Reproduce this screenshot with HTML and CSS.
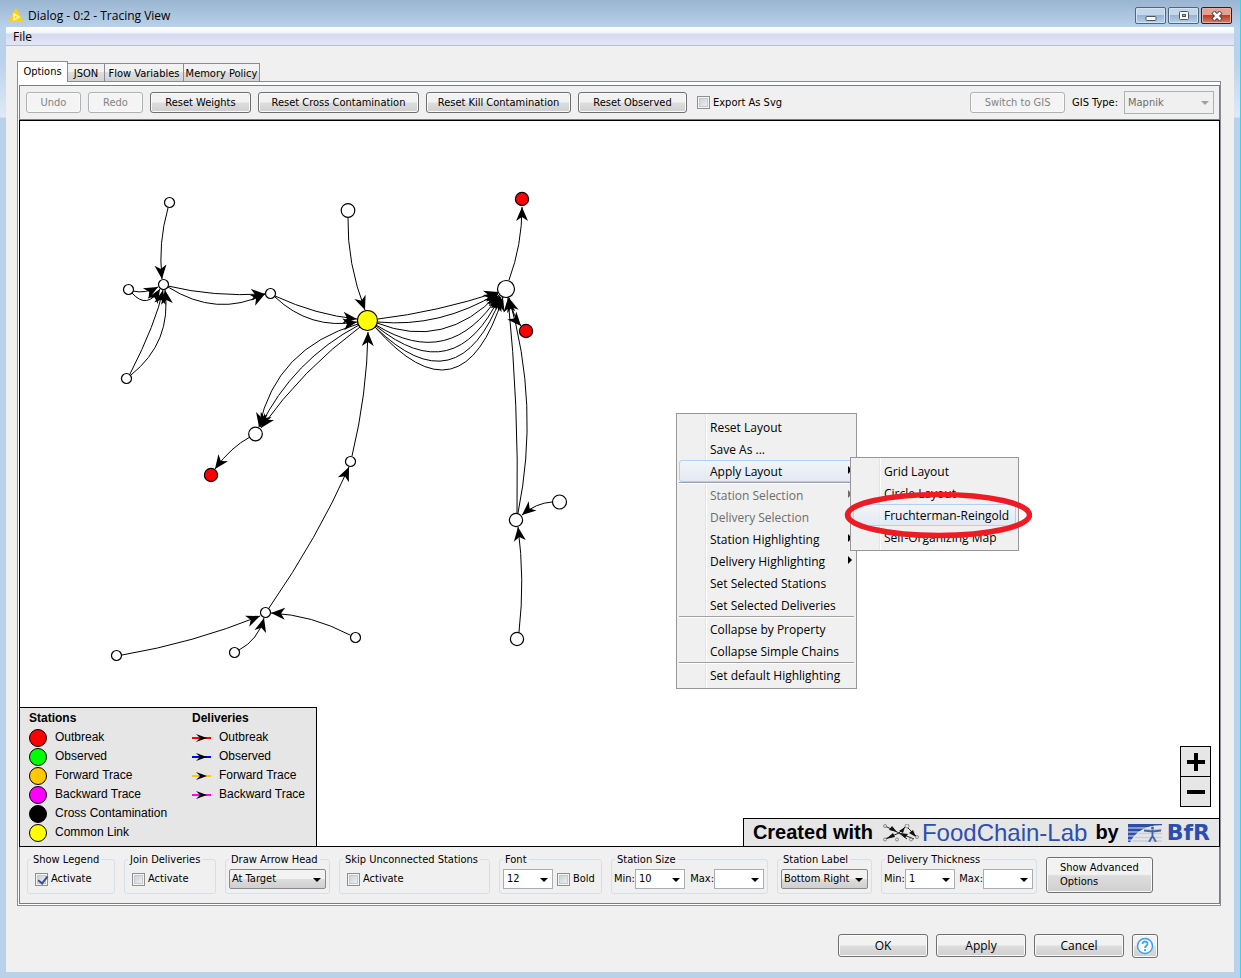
FILE: index.html
```html
<!DOCTYPE html>
<html lang="en">
<head>
<meta charset="utf-8">
<title>Dialog - 0:2 - Tracing View</title>
<link rel="stylesheet" href="styles.css">
</head>
<body>
<div class="window">
  <header class="titlebar">
    <svg class="titlebar-icon" width="16" height="14" viewBox="0 0 16 14" aria-hidden="true"><path d="M8 0 16 14H0Z" fill="#fcd20a"/><path d="M6 6 11 9 6 12Z" fill="none" stroke="#fff3a8" stroke-width="1.5"/></svg>
    <h1 class="titlebar-text">Dialog - 0:2 - Tracing View</h1>
    <div class="window-controls">
      <button class="win-btn" aria-label="Minimize"><svg width="12" height="10" viewBox="0 0 12 10"><rect x="1" y="5.500" width="10" height="4" rx="1" fill="#fff" stroke="#4a5565"/></svg></button>
      <button class="win-btn" aria-label="Maximize"><svg width="12" height="10" viewBox="0 0 12 10"><rect x="1.500" y=".5" width="9" height="8" rx="1" fill="#fff" stroke="#4a5565"/><rect x="4.500" y="3.500" width="3" height="2" fill="#9db9d8" stroke="#4a5565"/></svg></button>
      <button class="win-btn win-btn--close" aria-label="Close"><svg width="12" height="10" viewBox="0 0 12 10"><path d="M2 1 10 9M10 1 2 9" stroke="#4d3a40" stroke-width="4.500"/><path d="M2.500 1.500 9.500 8.500M9.500 1.500 2.500 8.500" stroke="#fff" stroke-width="2.600"/></svg></button>
    </div>
  </header>

  <div class="client">
    <nav class="menubar"><button class="menubar-item">File</button></nav>

    <main class="content">
      <div class="tabs" role="tablist">
        <button class="tab tab--options tab--active" role="tab" aria-selected="true">Options</button>
        <button class="tab tab--json" role="tab">JSON</button>
        <button class="tab tab--flow" role="tab">Flow Variables</button>
        <button class="tab tab--memory" role="tab">Memory Policy</button>
      </div>

      <div class="panel">
        <section class="panel-inner">
          <div class="toolbar">
            <button class="btn btn--history" disabled>Undo</button>
            <button class="btn btn--history" disabled>Redo</button>
            <button class="btn btn--weights">Reset Weights</button>
            <button class="btn btn--cross">Reset Cross Contamination</button>
            <button class="btn btn--kill">Reset Kill Contamination</button>
            <button class="btn btn--observed">Reset Observed</button>
            <label class="check check--svg"><input type="checkbox">Export As Svg</label>
            <button class="btn btn--gis" disabled>Switch to GIS</button>
            <label for="gis-type">GIS Type:</label>
            <span class="combo combo--gis combo--disabled"><select id="gis-type" disabled><option>Mapnik</option></select></span>
          </div>

          <div class="canvas">
            <svg class="graph" width="1199" height="725" viewBox="20 121 1199 725" role="img" aria-label="Delivery network">
              <defs>
                <marker id="arrow" markerUnits="userSpaceOnUse" markerWidth="15" markerHeight="14" viewBox="-14 -7 15 14" refX="0" refY="0" orient="auto"><path d="M0 0-14-6-10 0-14 6Z"/></marker>
              </defs>
              <g class="edges">
                <path d="M168 208Q158 243 162 279"/>
                <path d="M348 218Q347 263 365 310"/>
                <path d="M133 291Q145 294 158 287"/>
                <path d="M132 293Q147 310 160 289"/>
                <path d="M130 374Q156 323 163 290"/>
                <path d="M131 375Q172 342 165 290"/>
                <path d="M168 286Q213 297 265 294"/>
                <path d="M168 287Q217 318 265 294"/>
                <path d="M275 296Q316 315 357 319"/>
                <path d="M275 297Q310 330 357 322"/>
                <path d="M378 319Q437 312 498 292"/>
                <path d="M378 322Q440 328 498 293"/>
                <path d="M377 323Q445 350 498 294"/>
                <path d="M376 325Q450 371 499 295"/>
                <path d="M376 326Q455 390 500 296"/>
                <path d="M375 327Q458 408 501 297"/>
                <path d="M375 327Q462 426 503 297"/>
                <path d="M358 324Q276 348 259 427"/>
                <path d="M359 325Q293 360 260 427"/>
                <path d="M360 327Q303 369 261 428"/>
                <path d="M250 437Q231 447 215 469"/>
                <path d="M269 608Q318 537 349 467"/>
                <path d="M352 456Q367 394 368 332"/>
                <path d="M122 655Q193 643 260 616"/>
                <path d="M239 650Q258 640 264 618"/>
                <path d="M350 635Q312 615 271 613"/>
                <path d="M509 280Q522 245 522 207"/>
                <path d="M509 298Q514 318 521 326"/>
                <path d="M517 513Q519 405 508 298"/>
                <path d="M518 513Q540 405 509 298"/>
                <path d="M552 502Q536 503 522 515"/>
                <path d="M519 632Q525 580 518 527"/>
              </g>
              <g class="nodes">
                <circle cx="169.500" cy="202.500" r="5"/><circle cx="163.500" cy="284.500" r="5"/><circle cx="128.500" cy="289.500" r="5"/>
                <circle cx="126.500" cy="378.500" r="5"/><circle cx="270.500" cy="293.500" r="5"/><circle cx="350.500" cy="461.500" r="5"/>
                <circle cx="265.500" cy="612.500" r="5"/><circle cx="116.500" cy="655.500" r="5"/><circle cx="234.500" cy="652.500" r="5"/>
                <circle cx="355.500" cy="637.500" r="5"/><circle cx="348" cy="210.500" r="6.800"/><circle cx="506" cy="289" r="8.500"/>
                <circle cx="255.500" cy="434" r="6.800"/><circle cx="516" cy="520" r="6.600"/><circle cx="559.500" cy="502" r="7"/>
                <circle cx="517" cy="639" r="6.600"/>
                <circle class="node--outbreak" cx="522" cy="199" r="6.600"/><circle class="node--outbreak" cx="526" cy="331" r="6.600"/>
                <circle class="node--outbreak" cx="211" cy="475" r="6.600"/>
                <circle class="node--common" cx="367.500" cy="320.500" r="10"/>
              </g>
            </svg>

            <aside class="legend">
              <div class="legend-col legend-col--stations">
                <h2>Stations</h2>
                <p><i class="dot dot--outbreak"></i>Outbreak</p>
                <p><i class="dot dot--observed"></i>Observed</p>
                <p><i class="dot dot--forward"></i>Forward Trace</p>
                <p><i class="dot dot--backward"></i>Backward Trace</p>
                <p><i class="dot dot--cross"></i>Cross Contamination</p>
                <p><i class="dot dot--common"></i>Common Link</p>
              </div>
              <div class="legend-col">
                <h2>Deliveries</h2>
                <p><svg class="line" width="19" height="8" viewBox="0 0 19 8"><path d="M0 4H19" stroke="#f00" stroke-width="2"/><path d="M15 4 4 0 8 4 4 8Z"/></svg>Outbreak</p>
                <p><svg class="line" width="19" height="8" viewBox="0 0 19 8"><path d="M0 4H19" stroke="#00f" stroke-width="2"/><path d="M15 4 4 0 8 4 4 8Z"/></svg>Observed</p>
                <p><svg class="line" width="19" height="8" viewBox="0 0 19 8"><path d="M0 4H19" stroke="#ffc800" stroke-width="2"/><path d="M15 4 4 0 8 4 4 8Z"/></svg>Forward Trace</p>
                <p><svg class="line" width="19" height="8" viewBox="0 0 19 8"><path d="M0 4H19" stroke="#f0f" stroke-width="2"/><path d="M15 4 4 0 8 4 4 8Z"/></svg>Backward Trace</p>
              </div>
            </aside>

            <div class="zoom">
              <button aria-label="Zoom in"><svg width="18" height="18" viewBox="0 0 18 18"><path d="M9 0V18M0 9H18" stroke="#000" stroke-width="4"/></svg></button>
              <button aria-label="Zoom out"><svg width="18" height="18" viewBox="0 0 18 18"><path d="M0 9H18" stroke="#000" stroke-width="4"/></svg></button>
            </div>

            <div class="credit">
              <span>Created with</span>
              <svg class="credit-net" width="36" height="18" viewBox="0 0 36 18" aria-hidden="true">
                <g stroke="#222" fill="none"><path d="M2 2 16 9 31 15M2 15 16 9 23 2 33 12M16 9 24 15"/></g>
                <g fill="#111"><path d="M14 8 6 6 9 2ZM3 15 10 9 12 13ZM22 3 16 7 20 9ZM33 13 26 9 30 6ZM17 9 25 10 22 14Z"/></g>
                <g fill="#e6e6e6" stroke="#666" stroke-width=".7"><circle cx="2" cy="2" r="1.500"/><circle cx="2" cy="15.500" r="1.500"/><circle cx="24" cy="2" r="2"/><circle cx="14" cy="15.500" r="1.500"/><circle cx="28" cy="15.500" r="1.500"/><circle cx="34" cy="13" r="1.500"/></g>
              </svg>
              <span class="credit-lab">FoodChain-Lab</span>
              <span>by</span>
              <svg class="credit-mark" width="34" height="18" viewBox="0 0 34 18" aria-hidden="true">
                <path d="M0 1.500H34M0 5.500H34M0 9.500H34M0 13.500H34M0 17H34" stroke="#c6cdd8" stroke-width="1.500"/>
                <path d="M0 0H34V2C20 1 8 8 3 18H0Z" fill="#2b4fae"/>
                <path d="M0 4H22M0 8H14M0 12H9M0 16H5" stroke="#e6e6e6" stroke-width="1"/>
                <path d="M3 18C8 8 20 1 34 2" fill="none" stroke="#e6e6e6" stroke-width="1.500"/>
                <circle cx="24.500" cy="4" r="1.500" fill="#3f66a8"/><path d="M16 6.500 24.500 7.500 33 6.500M24.500 6V12L21 18M24.500 12 28 18" fill="none" stroke="#3f66a8" stroke-width="1.800"/>
              </svg>
              <b class="credit-bfr">BfR</b>
            </div>

            <div class="menu menu--main" role="menu">
              <button role="menuitem">Reset Layout</button>
              <button role="menuitem">Save As ...</button>
              <button role="menuitem" class="has-sub is-hot">Apply Layout</button>
              <hr>
              <button role="menuitem" class="has-sub" disabled>Station Selection</button>
              <button role="menuitem" disabled>Delivery Selection</button>
              <button role="menuitem" class="has-sub">Station Highlighting</button>
              <button role="menuitem" class="has-sub">Delivery Highlighting</button>
              <button role="menuitem">Set Selected Stations</button>
              <button role="menuitem">Set Selected Deliveries</button>
              <hr>
              <button role="menuitem">Collapse by Property</button>
              <button role="menuitem">Collapse Simple Chains</button>
              <hr>
              <button role="menuitem">Set default Highlighting</button>
            </div>
            <div class="menu menu--sub" role="menu">
              <button role="menuitem">Grid Layout</button>
              <button role="menuitem">Circle Layout</button>
              <button role="menuitem" class="is-hot">Fruchterman-Reingold</button>
              <button role="menuitem">Self-Organizing Map</button>
            </div>
            <svg class="callout" width="188" height="48" viewBox="0 0 188 48" aria-hidden="true"><ellipse cx="94.500" cy="24" rx="91" ry="20.500"/></svg>
          </div>

          <div class="settings">
            <fieldset class="group group--legend"><legend>Show Legend</legend><label class="check"><input type="checkbox" checked>Activate</label></fieldset>
            <fieldset class="group group--join"><legend>Join Deliveries</legend><label class="check"><input type="checkbox">Activate</label></fieldset>
            <fieldset class="group group--arrow group--tight"><legend>Draw Arrow Head</legend><span class="combo combo--button combo--fill"><select aria-label="Draw Arrow Head"><option>At Target</option></select></span></fieldset>
            <fieldset class="group group--skip"><legend>Skip Unconnected Stations</legend><label class="check"><input type="checkbox">Activate</label></fieldset>
            <fieldset class="group group--font group--tight"><legend>Font</legend><span class="combo combo--edit"><select aria-label="Font size"><option>12</option></select></span><label class="check check--bold"><input type="checkbox">Bold</label></fieldset>
            <fieldset class="group group--size group--range"><legend>Station Size</legend><label for="smin">Min:</label><span class="combo combo--edit"><select id="smin"><option>10</option></select></span><label class="max" for="smax">Max:</label><span class="combo combo--edit"><select id="smax"><option></option></select></span></fieldset>
            <fieldset class="group group--label group--tight"><legend>Station Label</legend><span class="combo combo--button combo--fill"><select aria-label="Station Label"><option>Bottom Right</option></select></span></fieldset>
            <fieldset class="group group--thick group--range"><legend>Delivery Thickness</legend><label for="dmin">Min:</label><span class="combo combo--edit"><select id="dmin"><option>1</option></select></span><label class="max" for="dmax">Max:</label><span class="combo combo--edit"><select id="dmax"><option></option></select></span></fieldset>
            <button class="btn btn--advanced">Show Advanced<br>Options</button>
          </div>
        </section>
      </div>

      <footer class="actions">
        <button class="btn btn--dialog">OK</button>
        <button class="btn btn--dialog">Apply</button>
        <button class="btn btn--dialog">Cancel</button>
        <button class="btn btn--help" aria-label="Help"><svg width="18" height="18" viewBox="0 0 18 18"><circle cx="9" cy="9" r="7.500" fill="#fff" stroke="#3aa0ee" stroke-width="1.500"/><path d="M6.500 7C6.500 3.500 11.700 3.800 11.500 7 11.400 8.700 9 8.800 9 11" fill="none" stroke="#3aa0ee" stroke-width="1.800"/><circle cx="9" cy="13.200" r="1.100" fill="#3aa0ee"/></svg></button>
      </footer>
    </main>
  </div>
</div>
</body>
</html>
```
FILE: styles.css
```css
* { box-sizing: border-box; }

body {
  margin: 0;
  font: 11px/14px "DejaVu Sans Condensed", "Noto Sans", sans-serif;
  color: #000;
}

button, select, input {
  font: inherit;
  color: inherit;
  margin: 0;
}

.window {
  display: flex;
  flex-direction: column;
  min-height: 100vh;
  padding: 0 6px 6px;
  border-right: 1px solid #35d4ee;
  background: linear-gradient(#9ab5d1 0, #b9d1ea 27px, #b9d1ea 60px, #dfeaf6 117px, #bad1ea 118px);
}

/* Title bar */
.titlebar {
  display: flex;
  align-items: center;
  height: 27px;
  padding: 4px 2px 0 2px;
}
.titlebar-icon { margin-top: -2px; }
.titlebar-text {
  flex: 1;
  margin: 0 0 0 4px;
  font: 12px/16px "Open Sans", sans-serif;
}
.window-controls { display: flex; gap: 2px; }
.win-btn {
  display: flex;
  align-items: center;
  justify-content: center;
  width: 31px;
  height: 17px;
  padding: 0;
  border: 1px solid #50657f;
  border-radius: 2px;
  background: linear-gradient(#c3d6ea 45%, #98b4d1 50%, #b8d0e8);
  box-shadow: inset 0 0 0 1px #d4e3f2;
}
.win-btn--close {
  border-color: #431422;
  background: linear-gradient(#e3a093 45%, #b93e25 50%, #d1826c);
  box-shadow: inset 0 0 0 1px #e7b0a4;
}

.client {
  flex: 1;
  display: flex;
  flex-direction: column;
  background: #f0f0f0;
}
.menubar {
  display: flex;
  height: 19px;
  border-bottom: 1px solid #b6bccc;
  background: linear-gradient(#fff 0, #f2f4fb 6px, #d5dbef 7px, #e1e6f6);
}
.menubar-item {
  padding: 2px 7px 0;
  border: 0;
  background: none;
  font: 12px/16px "Open Sans", sans-serif;
}

.content {
  flex: 1;
  display: flex;
  flex-direction: column;
  padding: 15px 13px 14px 11px;
}

/* Tabs */
.tabs {
  display: flex;
  align-items: flex-end;
  height: 20px;
}
.tab {
  height: 18px;
  padding: 2px 0 0;
  border: 1px solid #898c95;
  border-bottom: 0;
  border-left-width: 0;
  background: linear-gradient(#f2f2f2 45%, #dedede 50%, #d2d2d2);
  white-space: nowrap;
}
.tab--active {
  z-index: 1;
  height: 21px;
  margin-bottom: -1px;
  padding: 0;
  border-left-width: 1px;
  background: #fff;
}
.tab--options { width: 51px; }
.tab--json { width: 37px; }
.tab--flow { width: 79px; }
.tab--memory { width: 76px; }

.panel {
  flex: 1;
  display: flex;
  border: 1px solid #898c95;
  padding: 3px 0 1px 1px;
  background: #fff;
}
.panel-inner {
  flex: 1;
  display: flex;
  flex-direction: column;
  min-width: 0;
  border: solid #7a7c88;
  border-width: 1px 0;
  background: #f0f0f0;
}

/* Buttons */
.btn {
  height: 21px;
  padding: 0;
  border: 1px solid #707070;
  border-radius: 3px;
  background: linear-gradient(#f2f2f2 48%, #dddddd 52%, #cfcfcf);
  box-shadow: inset 0 0 0 1px #fafafa;
  white-space: nowrap;
}
.btn:disabled {
  color: #838383;
  border-color: #adb2b5;
  background: #f4f4f4;
}
.btn--history { width: 55px; }
.btn--weights { width: 101px; }
.btn--cross { width: 161px; }
.btn--kill { width: 145px; }
.btn--observed { width: 109px; }
.btn--gis { width: 95px; margin-left: auto; }

.toolbar {
  display: flex;
  align-items: center;
  gap: 7px;
  height: 34px;
  padding: 0 5px 0 6px;
  border: solid #7a7c88;
  border-width: 0 1px 1px;
}

/* Check boxes */
.check {
  display: flex;
  align-items: center;
  gap: 3px;
  white-space: nowrap;
}
.check--svg { margin-left: 3px; }
.check input {
  appearance: none;
  position: relative;
  flex: none;
  width: 13px;
  height: 13px;
  border: 1px solid #8e8f8f;
  background: linear-gradient(135deg, #c4c9ce, #f6f6f6);
  box-shadow: inset 0 0 0 1px #f4f4f4, inset 0 0 0 2px #c6cacf;
}
.check input:checked::after {
  content: "";
  position: absolute;
  left: 4px;
  top: 0;
  width: 4px;
  height: 8px;
  border: solid #3c4f92;
  border-width: 0 2px 2px 0;
  transform: rotate(38deg);
}

/* Drop-downs */
.combo {
  position: relative;
  display: flex;
  height: 20px;
}
.combo select {
  appearance: none;
  width: 100%;
  height: 100%;
  padding: 0 0 0 3px;
  border: 1px solid #abadb3;
  border-radius: 0;
  background: #fff;
}
.combo::after {
  content: "";
  position: absolute;
  right: 5px;
  top: 9px;
  border: solid transparent;
  border-width: 4px 4px 0;
  border-top-color: #000;
}
.combo--edit { width: 50px; }
.combo--fill { flex: 1; }
.combo--button select {
  padding-left: 2px;
  border-color: #8a8a8a;
  border-radius: 2px;
  background: linear-gradient(#f2f2f2 48%, #dddddd 52%, #cfcfcf);
}
.combo--gis { width: 90px; height: 23px; margin-left: -1px; }
.combo--disabled::after { top: 10px; border-top-color: #a0a0a0; }
.combo--disabled select {
  opacity: 1;
  color: #6d6d6d;
  border-color: #adb2b5;
  background: #f0f0f0;
}

/* Canvas */
.canvas {
  position: relative;
  flex: 1;
  min-height: 727px;
  overflow: hidden;
  border: 1px solid #000;
  background: #fff;
}
.graph { display: block; }
.edges { fill: none; stroke: #000; }
.edges path { marker-end: url(#arrow); }
.edges marker path, marker path { fill: #000; stroke: none; }
.nodes { fill: #fff; stroke: #000; stroke-width: 1.2; }
.node--outbreak { fill: #f00; }
.node--common { fill: #ff0; }

.legend {
  position: absolute;
  left: 0;
  bottom: 0;
  display: flex;
  width: 297px;
  padding: 1px 0 4px 9px;
  border: solid #000;
  border-width: 1px 1px 0 0;
  background: #e6e6e6;
  font: 12px/19px "Liberation Sans", Arial, sans-serif;
}
.legend-col--stations { width: 163px; }
.legend h2 { margin: 0; font-size: 12px; line-height: 19px; }
.legend p {
  display: flex;
  align-items: center;
  height: 19px;
  margin: 0;
}
.dot {
  width: 18px;
  height: 18px;
  margin-right: 8px;
  border: 1px solid #000;
  border-radius: 50%;
}
.dot--outbreak { background: #f00; }
.dot--observed { background: #0f0; }
.dot--forward { background: #ffc800; }
.dot--backward { background: #f0f; }
.dot--cross { background: #000; }
.dot--common { background: #ff0; }
.line { margin-right: 8px; }

.zoom {
  position: absolute;
  right: 8px;
  bottom: 39px;
  display: flex;
  flex-direction: column;
  border: 1px solid #000;
}
.zoom button {
  display: flex;
  align-items: center;
  justify-content: center;
  width: 29px;
  height: 29px;
  padding: 0;
  border: 0;
  background: #e6e6e6;
}
.zoom button + button { border-top: 1px solid #000; height: 30px; }

.credit {
  position: absolute;
  right: 0;
  bottom: 0;
  display: flex;
  align-items: center;
  height: 28px;
  padding: 0 9px;
  border: solid #000;
  border-width: 1px 0 0 1px;
  background: #e6e6e6;
  font: bold 20px/27px "Liberation Sans", Arial, sans-serif;
}
.credit-net { margin: 0 3px 0 10px; }
.credit-lab { margin-right: 8px; font-size: 24px; font-weight: normal; color: #2b4fae; }
.credit-mark { margin: 0 5px 0 9px; }
.credit-bfr { font: bold 22px/27px "DejaVu Sans", sans-serif; color: #2b4fae; }

/* Context menus */
.menu {
  position: absolute;
  display: flex;
  flex-direction: column;
  padding: 2px;
  border: 1px solid #979797;
  background: linear-gradient(90deg, transparent 28px, #e2e3e3 28px, #e2e3e3 29px, #fff 29px, #fff 30px, transparent 30px) #f0f0f0;
}
.menu button {
  position: relative;
  height: 22px;
  padding: 2px 0 0 30px;
  border: 1px solid transparent;
  border-radius: 3px;
  background: none;
  font: 12px/18px "Open Sans", sans-serif;
  text-align: left;
  white-space: nowrap;
}
.menu button:disabled { color: #6d6d6d; }
.menu .is-hot {
  border-color: #aecff7;
  background: linear-gradient(rgba(243, 245, 249, .8), rgba(223, 232, 246, .8));
}
.menu .has-sub::after {
  content: "";
  position: absolute;
  right: 1px;
  top: 5px;
  border: solid transparent;
  border-width: 4px 0 4px 4px;
  border-left-color: currentColor;
}
.menu hr {
  width: 100%;
  height: 2px;
  margin: 0;
  border: solid #a0a0a0;
  border-width: 1px 0 0;
  background: #fff;
}
.menu--main { left: 656px; top: 292px; width: 181px; }
.menu--sub { left: 830px; top: 336px; width: 169px; }
.callout { position: absolute; left: 824px; top: 370px; }
.callout ellipse { fill: none; stroke: #ed1c24; stroke-width: 5.5; }

/* Settings row */
.settings {
  display: flex;
  gap: 9px;
  height: 56px;
  padding: 5px 8px 0 7px;
  border: solid #7a7c88;
  border-width: 0 1px;
}
.group {
  display: flex;
  align-items: center;
  flex: none;
  height: 42px;
  min-width: 0;
  margin: 0;
  padding: 3px 7px 4px;
  border: 1px solid #d5dfe5;
  border-radius: 3px;
  white-space: nowrap;
}
.group legend { height: 14px; margin-left: -4px; padding: 0 2px; line-height: 16px; }
.group--tight { padding: 3px 3px 4px; }
.group--tight legend { margin-left: 0; }
.group--range { padding: 3px 3px 4px 2px; }
.group--range legend { margin-left: 1px; }
.group--legend { width: 88px; }
.group--join { width: 92px; }
.group--arrow { width: 105px; }
.group--skip { width: 151px; }
.group--font { width: 103px; }
.group--size { width: 157px; }
.group--label { width: 95px; }
.group--thick { width: 156px; }
.check--bold { margin-left: 4px; }
.max { margin-left: auto; }

.btn--advanced {
  width: 107px;
  height: 36px;
  margin-top: 5px;
  padding: 0 13px;
  text-align: left;
}

/* Dialog buttons */
.actions {
  display: flex;
  align-items: flex-start;
  justify-content: flex-end;
  gap: 8px;
  padding: 28px 63px 0 0;
}
.btn--dialog {
  width: 90px;
  height: 23px;
  font: 12px/20px "Open Sans", sans-serif;
}
.btn--help {
  display: flex;
  align-items: center;
  justify-content: center;
  width: 26px;
  height: 24px;
}
```
